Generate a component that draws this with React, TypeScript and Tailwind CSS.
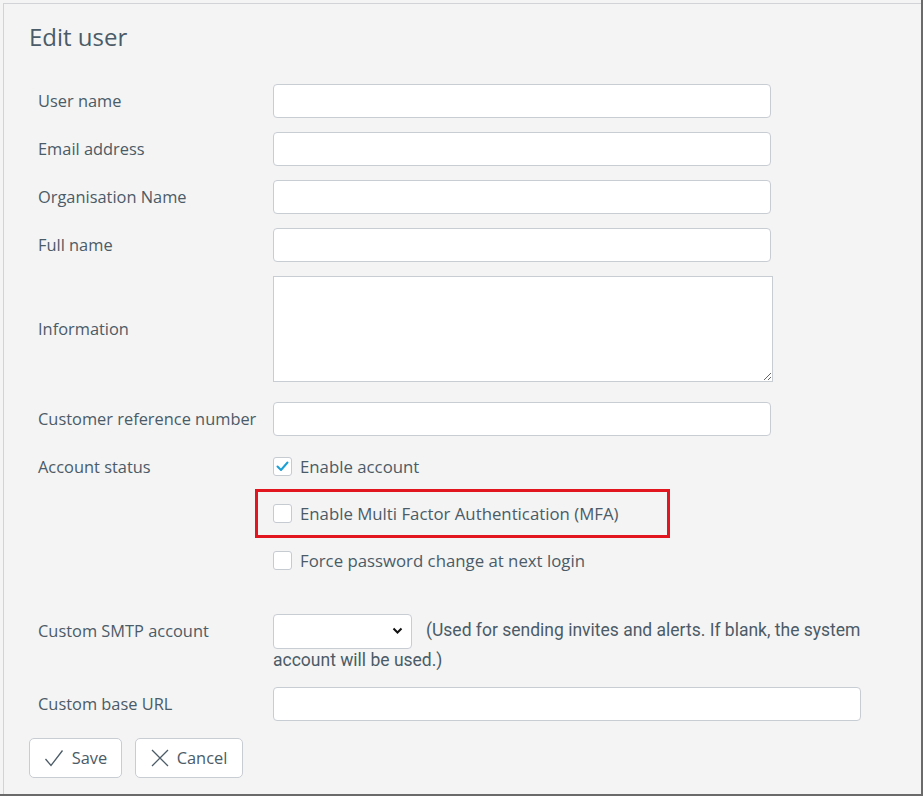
import React from "react";

const font = { fontFamily: '"Open Sans", "Liberation Sans", sans-serif' };

function Row({ label, children, className = "" }: { label: string; children: React.ReactNode; className?: string }) {
  return (
    <div className={`flex items-center ${className}`}>
      <div className="w-[244px] pl-[9px] text-[16.4px] text-[#4b5b67] shrink-0">{label}</div>
      {children}
    </div>
  );
}

function Box({ checked }: { checked?: boolean }) {
  return (
    <span className="w-[19px] h-[19px] rounded-[3px] border border-[#c6cad1] bg-white flex items-center justify-center shrink-0">
      {checked && (
        <svg width="13" height="11" viewBox="0 0 13 11" fill="none">
          <path d="M1.5 5.5 L5 9 L11.5 1.5" stroke="#1a9fd6" strokeWidth="2" strokeLinecap="round" strokeLinejoin="round" />
        </svg>
      )}
    </span>
  );
}

export default function App() {
  const input = "h-[34px] bg-white border border-[#c8ccd3] rounded-[4px] outline-none";
  return (
    <div className="w-[923px] h-[796px] bg-[#f4f4f4] relative overflow-hidden" style={font}>
      <div className="absolute left-[3px] top-[3px] right-[2px] bottom-[2px] border-l border-t border-[#d2d3d7] bg-[#f4f4f4]">
        <div className="pl-[25px] pt-[19px]">
          <h1 className="text-[24px] leading-[28px] text-[#4b5b67]">Edit user</h1>

          <div className="mt-[33px] flex flex-col">
            <Row label="User name"><input className={`${input} w-[498px]`} /></Row>
            <Row label="Email address" className="mt-[14px]"><input className={`${input} w-[498px]`} /></Row>
            <Row label="Organisation Name" className="mt-[14px]"><input className={`${input} w-[498px]`} /></Row>
            <Row label="Full name" className="mt-[14px]"><input className={`${input} w-[498px]`} /></Row>
            <Row label="Information" className="mt-[14px]">
              <textarea className="w-[500px] h-[106px] bg-white border border-[#c8ccd3] outline-none resize" />
            </Row>
            <Row label="Customer reference number" className="mt-[20px]"><input className={`${input} w-[498px]`} /></Row>

            <div className="flex mt-[21px]">
              <div className="w-[244px] pl-[9px] text-[16.4px] text-[#4b5b67] shrink-0 leading-[19px]">Account status</div>
              <div className="flex flex-col gap-[28px] text-[16.8px] text-[#4b5b67] leading-[19px]">
                <label className="flex items-center gap-[8px]"><Box checked />Enable account</label>
                <label className="flex items-center gap-[8px]"><Box />Enable Multi Factor Authentication (MFA)</label>
                <label className="flex items-center gap-[8px]"><Box />Force password change at next login</label>
              </div>
            </div>

            <div className="flex mt-[46px]">
              <div className="w-[244px] pl-[9px] text-[16.4px] text-[#4b5b67] shrink-0 leading-[29px]">Custom SMTP account</div>
              <div className="w-[592px] text-[17.5px] leading-[29px] text-[#4b5b67]" style={{ fontFamily: "Roboto, sans-serif" }}>
                <span className="inline-flex align-middle -my-[3px] w-[139px] h-[35px] bg-white border border-[#c8ccd3] rounded-[4px] items-center justify-end pr-[8px] mr-[14px]">
                  <svg width="11" height="8" viewBox="0 0 11 8" fill="none">
                    <path d="M1.5 1.5 L5.5 5.5 L9.5 1.5" stroke="#111" strokeWidth="2" />
                  </svg>
                </span>
                (Used for sending invites and alerts. If blank, the system account will be used.)
              </div>
            </div>

            <Row label="Custom base URL" className="mt-[12px]"><input className={`${input} w-[588px]`} /></Row>
          </div>

          <div className="flex gap-[13px] mt-[17px]">
            <button className="h-[40px] w-[93px] bg-white border border-[#c8ccd3] rounded-[5px] flex items-center justify-center gap-[8px] text-[16.4px] text-[#4b5b67]">
              <svg width="20" height="18" viewBox="0 0 20 18" fill="none">
                <path d="M1.5 10 L7 16.5 L18.5 1.5" stroke="#4b5b67" strokeWidth="1.3" />
              </svg>
              Save
            </button>
            <button className="h-[40px] w-[108px] bg-white border border-[#c8ccd3] rounded-[5px] flex items-center justify-center gap-[8px] text-[16.4px] text-[#4b5b67]">
              <svg width="18" height="18" viewBox="0 0 18 18" fill="none">
                <path d="M1 1 L17 17 M17 1 L1 17" stroke="#4b5b67" strokeWidth="1.3" />
              </svg>
              Cancel
            </button>
          </div>
        </div>
      </div>
      <div className="absolute right-0 top-0 bottom-0 w-[2px] bg-[#6a6a6a]" />
      <div className="absolute left-0 right-0 bottom-0 h-[2px] bg-[#6a6a6a]" />
      <div className="absolute left-[255px] top-[489px] w-[415px] h-[49px] border-[3px] border-[#e2161f] pointer-events-none" />
    </div>
  );
}
